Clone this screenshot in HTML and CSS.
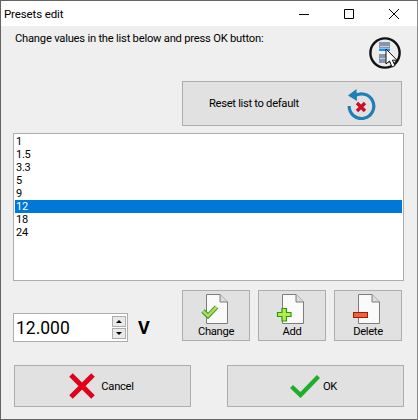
FILE: index.html
```html
<!DOCTYPE html>
<html lang="en">
<head>
    <meta charset="UTF-8">
    <meta name="viewport" content="width=device-width, initial-scale=1.0">
    <title>Presets edit</title>
    <link rel="stylesheet" href="styles.css">
</head>
<body>
    <div class="window">
        <div class="titlebar">
            <span class="title">Presets edit</span>
            <div class="window-controls">
                <svg width="10" height="10" viewBox="0 0 10 10"><path d="M0 5.5H10" stroke="#000" fill="none"/></svg>
                <svg width="10" height="10" viewBox="0 0 10 10"><path d="M.5.5H9.5V9.5H.5Z" stroke="#000" fill="none"/></svg>
                <svg width="10" height="10" viewBox="0 0 10 10"><path d="M0 0L10 10M10 0L0 10" stroke="#000" stroke-width="1" fill="none"/></svg>
            </div>
        </div>
        <div class="content">
            <div class="intro">
                <span class="intro-text">Change values in the list below and press OK button:</span>
                <svg class="help-icon" width="32" height="32" viewBox="0 0 32 32">
                    <circle cx="16" cy="16" r="14.6" fill="#ececec" stroke="#111" stroke-width="2.400"/>
                    <rect x="10" y="5" width="11" height="21" fill="#8497ad"/>
                    <path d="M11 9.5H20M11 21.5H20" stroke="#c6d0da" stroke-width="1"/>
                    <rect x="10" y="11" width="11" height="6" fill="#e8f2fb"/>
                    <rect x="10" y="11.5" width="11" height="2.5" fill="#1e90f0"/>
                    <path d="M17 12V27L20.5 24L23 30L26 28.6L23.4 23.2H28Z" fill="#fff" stroke="#111" stroke-width="1"/>
                </svg>
            </div>
            <div class="reset-row">
                <button class="btn btn-reset">
                    <span>Reset list to default</span>
                    <svg width="30" height="32" viewBox="0 0 30 32">
                        <path d="M8 8.5A12.3 12.3 0 1 1 3.2 18" fill="none" stroke="#1c7fb8" stroke-width="3.2"/>
                        <path d="M10.5 1L2 7.5L11 13Z" fill="#1c7fb8"/>
                        <path d="M11 15L19 23M19 15L11 23" stroke="#c8102e" stroke-width="3.4" fill="none"/>
                    </svg>
                </button>
            </div>
            <ul class="preset-list">
                <li>1</li>
                <li>1.5</li>
                <li>3.3</li>
                <li>5</li>
                <li>9</li>
                <li class="selected">12</li>
                <li>18</li>
                <li>24</li>
            </ul>
            <div class="edit-row">
                <div class="value-box">
                    <div class="spinner">
                        <span class="value">12.000</span>
                        <div class="spin-buttons">
                            <span class="spin"><i class="arrow-up"></i></span>
                            <span class="spin"><i class="arrow-down"></i></span>
                        </div>
                    </div>
                    <span class="unit">V</span>
                </div>
                <div class="actions">
                    <button class="btn btn-action">
                        <svg width="32" height="30" viewBox="3 0 32 30">
                            <path class="page" d="M9.5.5H23L30.5 8V29.5H9.5Z"/>
                            <path class="page-fold" d="M23 .5V8H30.5"/>
                            <path d="M6 17L11 22L19.500 13" fill="none" stroke="#3f8f1f" stroke-width="4.600"/>
                            <path d="M6 17L11 22L19.500 13" fill="none" stroke="#a6e05a" stroke-width="2.600"/>
                        </svg>
                        <span>Change</span>
                    </button>
                    <button class="btn btn-action">
                        <svg width="32" height="30" viewBox="3 0 32 30">
                            <path class="page" d="M9.5.5H23L30.5 8V29.5H9.5Z"/>
                            <path class="page-fold" d="M23 .5V8H30.5"/>
                            <path d="M9 14.500H13.500V18.500H18V22.500H13.500V27H9V22.500H4.500V18.500H9Z" fill="#b4ec50" stroke="#2f9a10" stroke-width="1.200"/>
                        </svg>
                        <span>Add</span>
                    </button>
                    <button class="btn btn-action">
                        <svg width="32" height="30" viewBox="3 0 32 30">
                            <path class="page" d="M9.5.5H23L30.5 8V29.5H9.5Z"/>
                            <path class="page-fold" d="M23 .5V8H30.5"/>
                            <rect x="4.500" y="18.500" width="14" height="5" fill="#f0603a" stroke="#9c1c10"/>
                        </svg>
                        <span>Delete</span>
                    </button>
                </div>
            </div>
            <div class="dialog-row">
                <button class="btn btn-dialog btn-cancel">
                    <svg width="26" height="26" viewBox="0 0 26 26"><path d="M2 2L24 24M24 2L2 24" stroke="#e0001b" stroke-width="5" fill="none"/></svg>
                    <span>Cancel</span>
                </button>
                <button class="btn btn-dialog btn-ok">
                    <svg width="30" height="23" viewBox="0 0 30 23"><path d="M1.500 11.500L10.500 20L28.500 1.500" stroke="#1fae2c" stroke-width="4.400" fill="none"/></svg>
                    <span>OK</span>
                </button>
            </div>
        </div>
    </div>
</body>
</html>
```

FILE: styles.css
```css
* {
    box-sizing: border-box;
}
body {
    margin: 0;
    font-family: Roboto, Arial, sans-serif;
    font-size: 11.2px;
    letter-spacing: -0.22px;
    color: #000;
}
.window {
    width: 418px;
    height: 420px;
    border: 1px solid #646464;
    border-right-color: #8a8a8a;
    background-color: #efefef;
    display: flex;
    flex-direction: column;
}
.titlebar {
    height: 25px;
    background-color: #ffffff;
    display: flex;
    align-items: center;
    justify-content: space-between;
    padding: 0 18px 0 3px;
    flex-shrink: 0;
}
.title {
    font-size: 11.5px;
    letter-spacing: -0.13px;
}
.window-controls {
    display: flex;
    gap: 35px;
}
.content {
    flex: 1;
    padding: 0 13px 0 12px;
}
.intro {
    height: 55px;
    position: relative;
    padding: 5px 0 0 2px;
}
.intro-text {
    line-height: 16px;
    display: block;
}
.help-icon {
    position: absolute;
    top: 11px;
    right: 3px;
}
.reset-row {
    display: flex;
    justify-content: flex-end;
    padding-right: 2px;
}
.btn {
    font: inherit;
    letter-spacing: -0.3px;
    color: #000;
    background-color: #e1e1e1;
    border: 1px solid #adadad;
    padding: 0;
    cursor: pointer;
}
.btn-reset {
    width: 220px;
    height: 45px;
    display: flex;
    align-items: center;
    padding-left: 26px;
    gap: 47px;
}
.preset-list {
    list-style: none;
    margin: 7px 0 0;
    padding: 1px;
    height: 148px;
    background-color: #ffffff;
    border: 1px solid #adadad;
    font-size: 11px;
    letter-spacing: -0.3px;
}
.preset-list li {
    height: 13px;
    line-height: 13px;
    padding-left: 1px;
}
.preset-list .selected {
    background-color: #0078d7;
    color: #ffffff;
}
.edit-row {
    display: flex;
    justify-content: space-between;
    margin-top: 9px;
    padding-right: 2px;
}
.value-box {
    display: flex;
    align-items: center;
    gap: 10px;
    padding-top: 23px;
}
.spinner {
    width: 115px;
    height: 29px;
    background-color: #ffffff;
    border: 1px solid #adadad;
    display: flex;
    align-items: center;
    justify-content: space-between;
    padding: 0 1px 0 2px;
}
.value {
    font-size: 17.5px;
    letter-spacing: 0;
}
.spin-buttons {
    display: flex;
    flex-direction: column;
    gap: 1px;
}
.spin {
    width: 14px;
    height: 11px;
    background-color: #e9e9e9;
    border: 1px solid #adadad;
    display: flex;
    align-items: center;
    justify-content: center;
}
.arrow-up, .arrow-down {
    display: block;
    border-left: 3px solid transparent;
    border-right: 3px solid transparent;
}
.arrow-up {
    border-bottom: 3px solid #000;
}
.arrow-down {
    border-top: 3px solid #000;
}
.unit {
    font-size: 18px;
    font-weight: bold;
    letter-spacing: 0;
}
.actions {
    display: flex;
    gap: 8px;
}
.btn-action {
    width: 68px;
    height: 51px;
    display: flex;
    flex-direction: column;
    align-items: center;
    padding-top: 3px;
    line-height: 16px;
}
.page {
    fill: #fafafa;
    stroke: #7d7d7d;
}
.page-fold {
    fill: #dcdcdc;
    stroke: #7d7d7d;
}
.dialog-row {
    display: flex;
    justify-content: space-between;
    margin-top: 23px;
    padding-left: 1px;
}
.btn-dialog {
    width: 177px;
    height: 42px;
    display: flex;
    align-items: center;
    justify-content: center;
}
.btn-cancel {
    gap: 6px;
    padding-right: 2px;
}
.btn-ok {
    gap: 3px;
    padding-right: 4px;
}
```
